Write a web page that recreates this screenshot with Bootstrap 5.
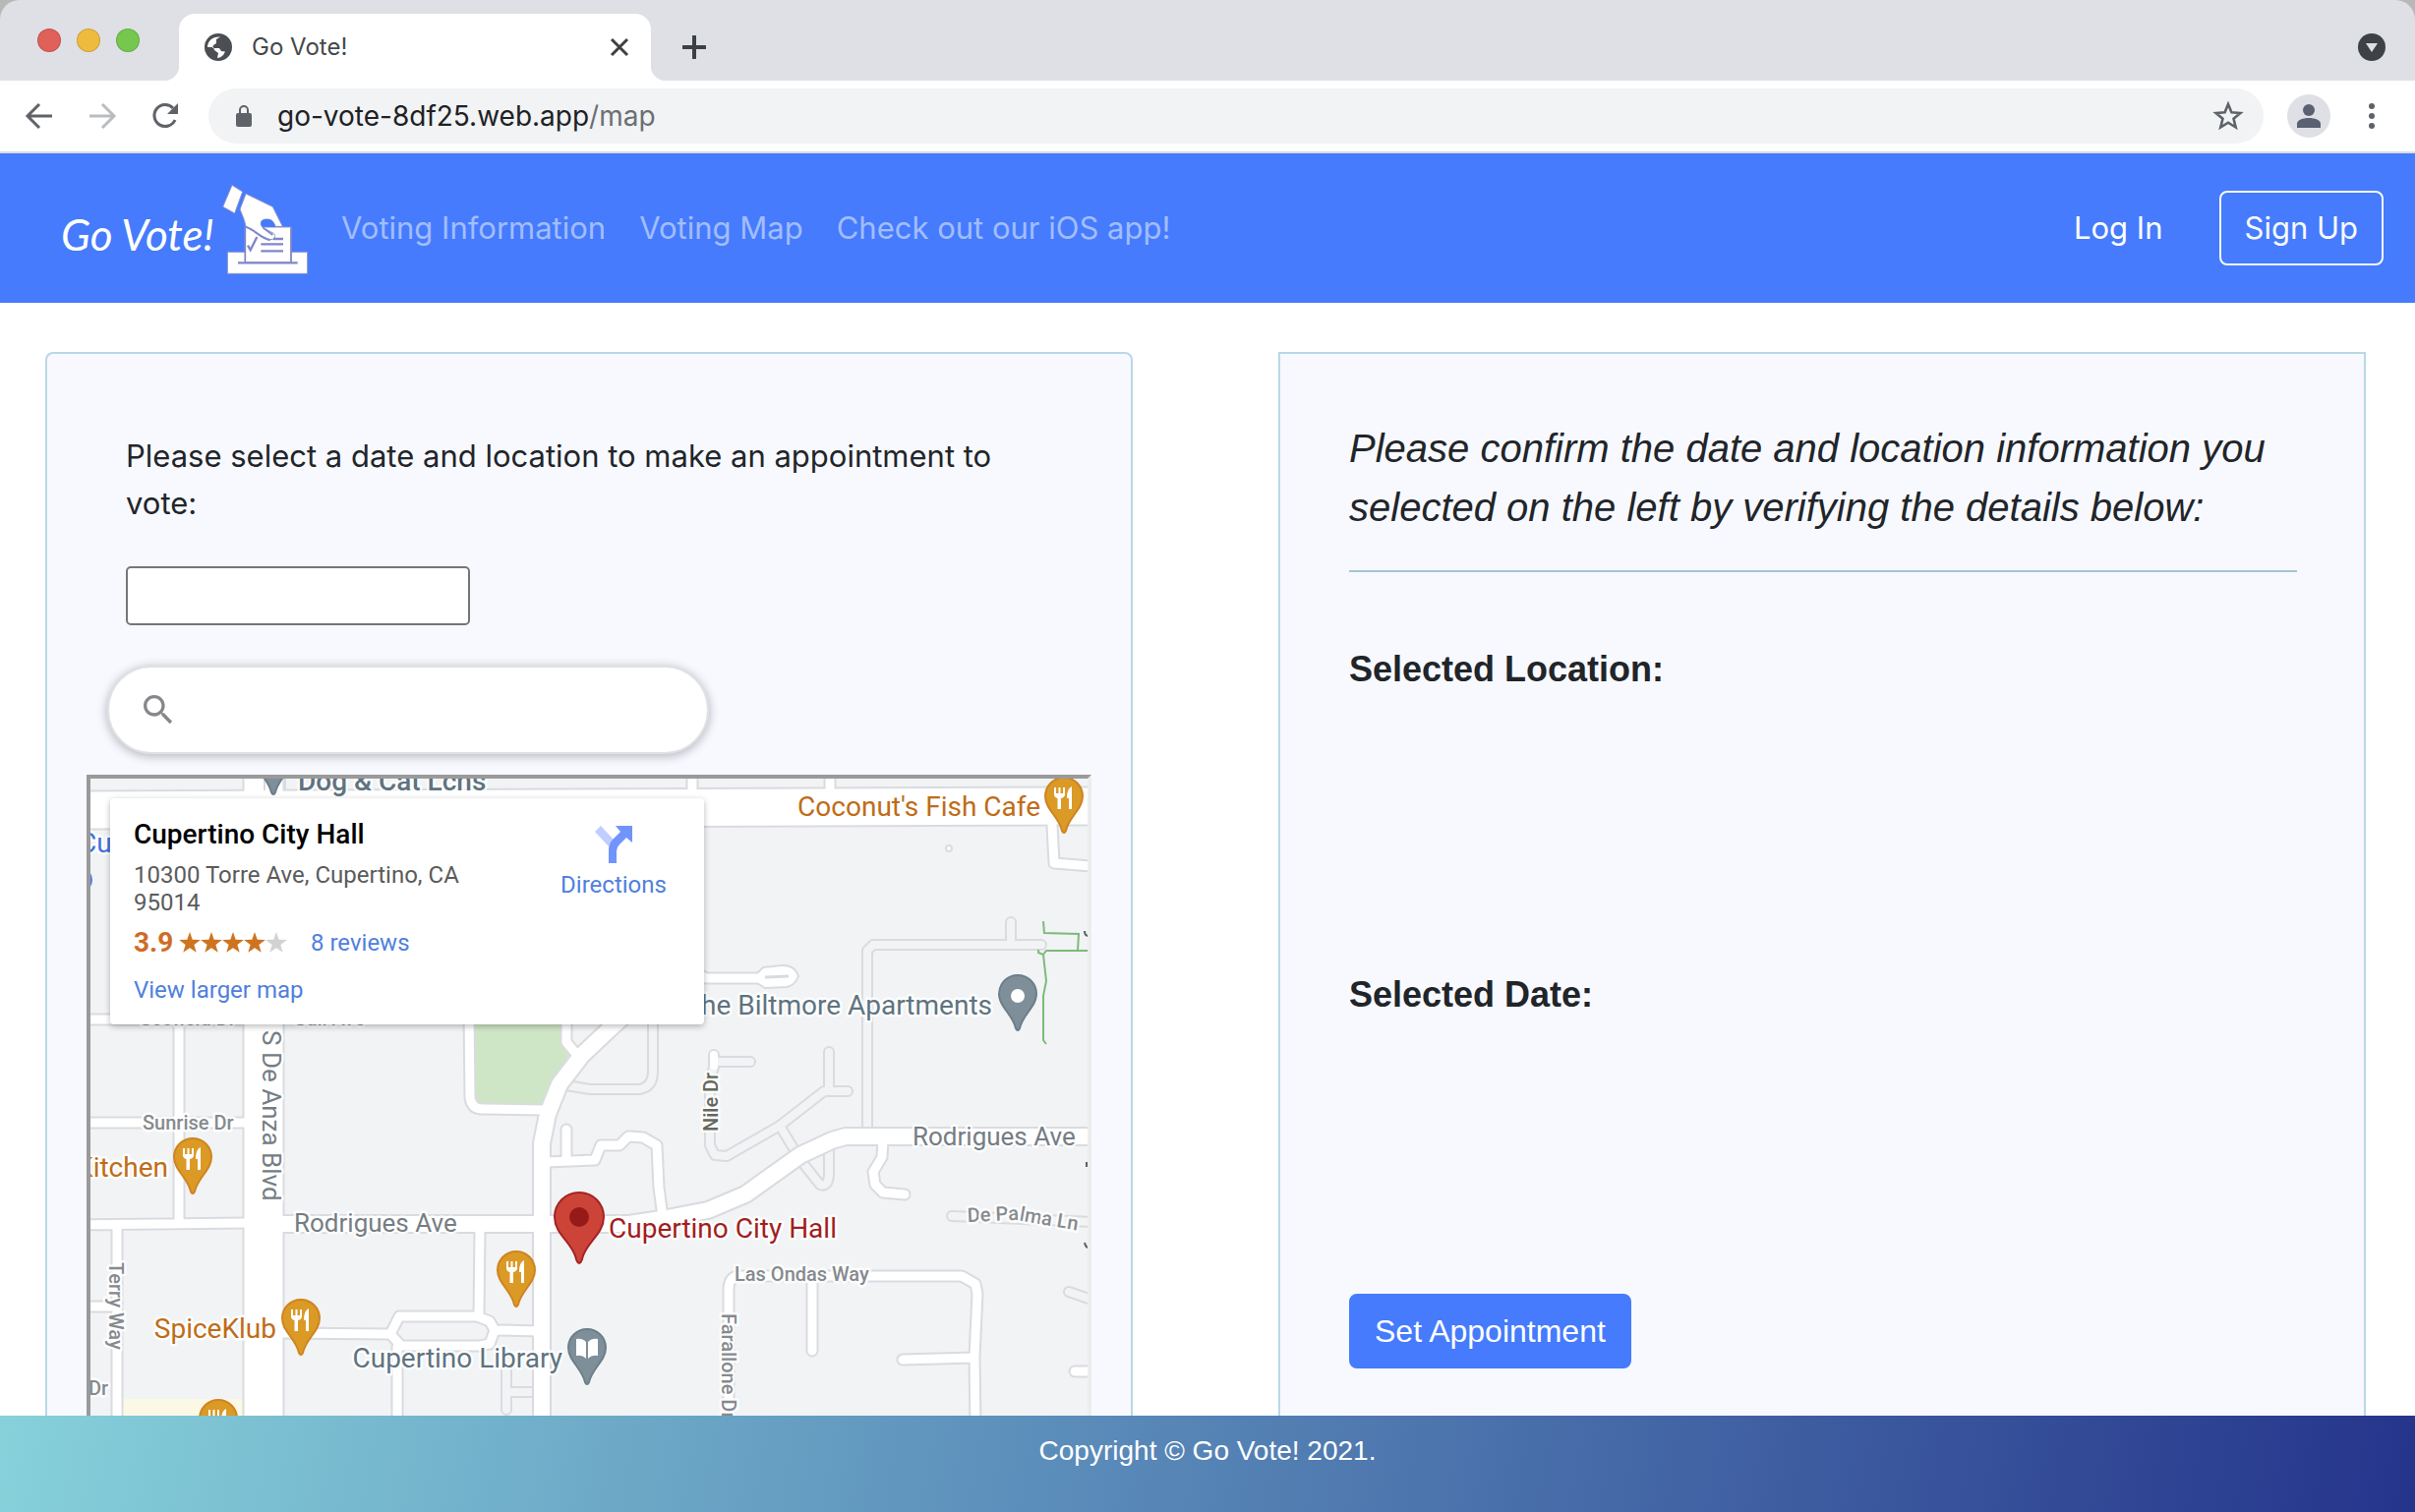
<!DOCTYPE html>
<html lang="en">
<head>
<meta charset="utf-8">
<meta name="viewport" content="width=device-width, initial-scale=1">
<title>Go Vote!</title>
<link href="https://cdn.jsdelivr.net/npm/bootstrap@5.3.0/dist/css/bootstrap.min.css" rel="stylesheet">
<style>
  body { font-family: Inter, "Liberation Sans", sans-serif; font-size: 31px; line-height: 48px; color: #212529; background: #fff; }
  svg { display: block; flex: none; }
  .icon-btn { border: 0; background: none; padding: 0; line-height: 0; color: #5f6368; }

  /* browser frame */
  .strip-back { background: #b9b8b8; }
  .tab-strip { height: 82px; background: #dee0e5; border-radius: 20px 20px 0 0; padding: 0 30px 0 38px; }
  .light-dot { width: 24px; height: 24px; border-radius: 50%; border: 1px solid rgba(0,0,0,.14); }
  .dot-close { background: #e0605a; }
  .dot-min { background: #efbb3f; }
  .dot-max { background: #76c74e; }
  .page-tab { position: relative; width: 480px; height: 68px; margin-left: 40px; padding: 0 20px 0 26px; background: #fff; border-radius: 16px 16px 0 0; font-size: 24px; color: #45494d; }
  .page-tab::before, .page-tab::after { content: ""; position: absolute; bottom: 0; width: 16px; height: 16px; }
  .page-tab::before { left: -16px; background: radial-gradient(circle at 0 0, transparent 16px, #fff 17px); }
  .page-tab::after { right: -16px; background: radial-gradient(circle at 100% 0, transparent 16px, #fff 17px); }
  .tab-extra { height: 68px; }
  .tool-row { height: 74px; border-bottom: 2px solid #dadce0; padding: 0 34px 0 24px; }
  .address { height: 56px; border-radius: 28px; background: #f1f3f4; padding: 0 20px 0 26px; margin-left: 28px; font-size: 28px; color: #202124; }
  .address-path { color: #6b6f73; }
  .avatar { width: 44px; height: 44px; border-radius: 50%; background: #dee0e6; }

  /* site header */
  .site-nav { height: 152px; background: #457bfc; padding: 0 32px 0 62px; }
  .site-brand { padding-top: 4px; }
  .brand-name { font-family: Lato, sans-serif; font-style: italic; font-size: 44px; color: #fff; width: 156px; padding-top: 8px; white-space: nowrap; }
  .site-nav .navbar-nav .nav-link { color: rgba(255,255,255,.5); padding: 0 17px; white-space: nowrap; }
  .site-nav .navbar-nav .login { color: #fff; }
  .btn-site { font-size: 31px; line-height: 48px; padding: 12px 24px; border-width: 2px; border-radius: 8px; }
  .btn-set { font-family: "Liberation Sans", Arial, sans-serif; font-size: 32px; background: #457bfc; border-color: #457bfc; color: #fff; }

  /* panels */
  .panels { padding-top: 50px; min-height: 0; }
  .panel { background: #f8f9ff; border: 2px solid #b8d8e7; border-bottom: 0; }
  .panel-pick { margin: 0 76px 0 46px; border-radius: 8px 8px 0 0; padding: 80px 40px 0; }
  .panel-confirm { margin: 0 50px 0 72px; padding: 66px 68px 0 70px; font-family: "Liberation Sans", Arial, sans-serif; }
  .pick-intro { margin: 0 60px 40px 40px; }
  .date-input { width: 350px; height: 60px; margin: 0 0 41px 40px; border: 2px solid #767676; border-radius: 5px; background: #fff; padding: 0 8px; }
  .search-pill { width: 612px; height: 90px; margin: 0 0 21px 21px; border: 2px solid #dfe1e5; border-radius: 45px; background: #fff; box-shadow: 0 2px 10px 1px rgba(32,33,36,.28); padding: 0 30px; }
  .search-pill input { border: 0; background: none; outline: 0; }
  .confirm-head { font-size: 40px; line-height: 60px; font-style: italic; margin: 0 0 34px; }
  .rule { height: 2px; margin: 0 0 72px; border: 0; background: #a5c4d2; opacity: 1; }
  .pick-label { font-size: 36px; line-height: 54px; font-weight: 700; margin: 0; }
  .pick-value { height: 277px; }

  /* map */
  .map-frame { border: 4px solid; border-color: #9a9a9a #ededed #ededed #9a9a9a; border-bottom: 0; background: #f1f3f5; min-height: 0; }
  .map-art { position: absolute; left: 0; top: 0; width: 100%; height: 100%; font-family: Roboto, sans-serif; }
  .map-art text { paint-order: stroke; stroke: #fff; stroke-width: 5px; stroke-linejoin: round; stroke-opacity: .85; }
  .poi { font-size: 28px; }
  .avenue { font-size: 26px; fill: #757d84; }
  .street { font-size: 20px; font-weight: 500; fill: #868a8e; }
  .place-card { position: absolute; left: 20px; top: 20px; width: 604px; height: 230px; padding: 20px 32px 20px 24px; background: #fff; border-radius: 4px; box-shadow: 0 2px 6px rgba(0,0,0,.28); font-family: Roboto, sans-serif; font-size: 24px; line-height: 28px; }
  .place-card a { color: #5080dd; text-decoration: none; }
  .place-name { font-size: 28px; line-height: 34px; font-weight: 500; color: #000; margin: 0 0 10px; }
  .place-address { width: 370px; color: #5b5b5b; margin: 0 0 9px; }
  .place-score { font-size: 28px; line-height: 36px; font-weight: 700; color: #cf6c25; width: 46px; }
  .place-directions { width: 120px; margin-top: 8px; }

  .site-footer { height: 98px; padding-top: 12px; background: linear-gradient(100deg, #86d1da 0%, #5a8bb9 45%, #25348b 100%); color: #fff; font-family: "Liberation Sans", Arial, sans-serif; font-size: 28px; }
</style>
</head>
<body class="d-flex flex-column vh-100 overflow-hidden">

<div class="strip-back">
  <div class="tab-strip d-flex align-items-end">
    <div class="d-flex align-items-center h-100 gap-3">
      <span class="light-dot dot-close"></span>
      <span class="light-dot dot-min"></span>
      <span class="light-dot dot-max"></span>
    </div>
    <div class="page-tab d-flex align-items-center">
      <svg width="28" height="28" viewBox="0 0 28 28"><circle cx="14" cy="14" r="14" fill="#4b4e53"/><path d="M16 3.500l-4 2.500v4l-3 2-1 3h7l2 3 4 .5-2 3.500c-2 2-4 3-6 3l1-5-4-3-1-3H3c0-6 5-11 13-10.500z" fill="#fff"/></svg>
      <span class="ms-3 ps-1">Go Vote!</span>
      <button class="icon-btn ms-auto" aria-label="Close tab"><svg width="24" height="24" viewBox="0 0 24 24"><path d="M4 4l16 16M20 4L4 20" stroke="#3d4043" stroke-width="3"/></svg></button>
    </div>
    <div class="tab-extra d-flex align-items-center flex-grow-1">
      <button class="icon-btn ms-4 ps-2" aria-label="New tab"><svg width="24" height="24" viewBox="0 0 24 24"><path d="M12 1v22M1 12h22" stroke="#3d4043" stroke-width="4" stroke-linecap="round"/></svg></button>
      <button class="icon-btn ms-auto" aria-label="Search tabs"><svg width="28" height="28" viewBox="0 0 28 28"><circle cx="14" cy="14" r="14" fill="#3e4145"/><path d="M8 10h12l-6 9z" fill="#dee0e5"/></svg></button>
    </div>
  </div>
</div>

<div class="tool-row d-flex align-items-center bg-white">
  <button class="icon-btn" aria-label="Back"><svg width="32" height="32" viewBox="0 0 32 32"><path d="M29 16H5M16 4L4 16l12 12" fill="none" stroke="#5f6368" stroke-width="3"/></svg></button>
  <button class="icon-btn ms-4 ps-2" aria-label="Forward"><svg width="32" height="32" viewBox="0 0 32 32"><path d="M3 16h24M16 4l12 12-12 12" fill="none" stroke="#babcbe" stroke-width="3"/></svg></button>
  <button class="icon-btn ms-4 ps-2" aria-label="Reload"><svg width="32" height="32" viewBox="0 0 32 32"><path d="M26 20a11 11 0 1 1-2-12" fill="none" stroke="#5f6368" stroke-width="3"/><path d="M29 3v11H18z" fill="#5f6368"/></svg></button>
  <div class="address d-flex align-items-center flex-grow-1">
    <svg width="20" height="24" viewBox="0 0 20 24"><rect x="2" y="9" width="16" height="14" rx="2" fill="#5f6368"/><path d="M6 10V6a4 4 0 0 1 8 0v4" fill="none" stroke="#5f6368" stroke-width="2"/></svg>
    <span class="ps-4">go-vote-8df25.web.app<span class="address-path">/map</span></span>
    <button class="icon-btn ms-auto" aria-label="Bookmark"><svg width="32" height="32" viewBox="0 0 32 32"><path d="M16 4l3.400 8.300 9 .7-6.900 5.800 2.200 8.700L16 22.700 8.300 27.500l2.200-8.700L3.600 13l9-.7z" fill="none" stroke="#5f6368" stroke-width="2.600"/></svg></button>
  </div>
  <button class="icon-btn avatar ms-4 d-flex align-items-center justify-content-center" aria-label="Profile"><svg width="26" height="26" viewBox="0 0 26 26"><circle cx="13" cy="7" r="6" fill="#5b6072"/><path d="M1 25v-4c0-4 6-6 12-6s12 2 12 6v4z" fill="#5b6072"/></svg></button>
  <button class="icon-btn ms-4 ps-2" aria-label="Menu"><svg width="20" height="28" viewBox="0 0 20 28"><g fill="#5f6368"><circle cx="10" cy="4" r="3"/><circle cx="10" cy="14" r="3"/><circle cx="10" cy="24" r="3"/></g></svg></button>
</div>

<nav class="site-nav navbar navbar-expand flex-nowrap">
  <a class="site-brand d-flex align-items-center text-decoration-none me-3" href="#">
    <span class="brand-name">Go Vote!</span>
    <svg class="ms-2" width="88" height="94" viewBox="528 52 264 282">
      <g fill="#fff" stroke="#8d90cf" stroke-width="3">
        <path d="M544 260H788V326H544z"/>
        <path d="M598 184H738V292H598z"/>
        <path d="M558 56l32 20-24 66-36-20z"/>
        <path d="M600 82l82 40 30 60h-22c-4-12-10-22-26-22-18 0-22 12-14 24l36 20c6 6 2 18-8 18-30-4-50-32-78-40-4-20-12-38-18-52z"/>
      </g>
      <path d="M650 183c-8-12-4-23 14-23 16 0 22 10 26 23z" fill="#457bfc"/>
      <g fill="none" stroke="#8087c6" stroke-width="7">
        <path d="M576 293H758"/><path d="M738 186V290M598 186V290" stroke-width="5"/>
        <path d="M684 220H714M646 236H714M646 257H714"/>
        <path d="M606 240l8 14 20-40"/>
        <path d="M600 184c30 10 40 32 74 40M652 186l30 22" stroke-width="5"/>
      </g>
    </svg>
  </a>
  <div class="navbar-nav flex-grow-1 align-items-center">
    <a class="nav-link" href="#">Voting Information</a>
    <a class="nav-link" href="#">Voting Map</a>
    <a class="nav-link" href="#">Check out our iOS app!</a>
    <a class="nav-link login ms-auto me-4" href="#">Log In</a>
    <a class="btn btn-outline-light btn-site ms-3" href="#">Sign Up</a>
  </div>
</nav>

<main class="panels row g-0 flex-grow-1 flex-nowrap">
  <section class="col-6 d-flex">
    <div class="panel panel-pick d-flex flex-column flex-grow-1">
      <label class="pick-intro" for="voteDate">Please select a date and location to make an appointment to vote:</label>
      <input class="date-input" id="voteDate" type="text">
      <div class="search-pill d-flex align-items-center">
        <svg width="40" height="40" viewBox="0 0 24 24" fill="#85878a"><path d="M15.500 14h-.79l-.28-.27C15.410 12.590 16 11.110 16 9.500 16 5.910 13.090 3 9.500 3S3 5.910 3 9.500 5.910 16 9.500 16c1.610 0 3.090-.59 4.230-1.570l.27.28v.79l5 4.990L20.490 19l-4.990-5zm-6 0C7.010 14 5 11.990 5 9.500S7.010 5 9.500 5 14 7.010 14 9.500 11.990 14 9.500 14z"/></svg>
        <input class="flex-grow-1 ms-2" type="search" aria-label="Search locations">
      </div>
      <div class="map-frame position-relative flex-grow-1 overflow-hidden">
        <svg class="map-art" viewBox="92 792 1014 648" preserveAspectRatio="xMinYMin slice">
          <defs>
            <g id="lanes" fill="none" stroke-linejoin="round" stroke-linecap="round">
              <path d="M576 1104L600 1108H650Q664 1106 664 1090V1036"/>
              <path d="M882 1150V967L888 961H1059M1028 957V938"/>
              <path d="M726 1073V1085L722 1100V1165L727 1175 739 1176 793 1145 838 1110H862M843 1070V1108M727 1080H763"/>
              <path d="M793 1145L814 1180 834 1205Q842 1208 843 1195V1165"/>
              <path d="M968 1237L1110 1243M1087 1314L1110 1322"/>
              <path d="M515 1385V1434M520 1416H550"/>
            </g>
            <g id="streets" fill="none" stroke-linejoin="round" stroke-linecap="round">
              <path d="M704 780V815M844 780V815"/>
              <path d="M182 1037V1243M80 1037H250M80 1142H250M80 1246L250 1244M119 1248V1450M80 1329H115"/>
              <path d="M477 1030L478 1117Q480 1128 490 1128L553 1129M576 1030V1060L586 1072"/>
              <path d="M700 985L718 995H771"/>
              <path d="M1070 840L1072 878 1110 881"/>
              <path d="M556 1182L605 1180 611 1165H630L639 1156 654 1157 668 1165 670 1208 674 1238M576 1149V1178"/>
              <path d="M898 1160L897 1177 888 1192 890 1205 898 1213 920 1215"/>
              <path d="M741 1450V1312Q741 1298 752 1298H978L992 1306 994 1316 991 1380 992 1450M826 1300V1374M918 1383L990 1381M1093 1395H1110"/>
              <path d="M288 1356L397 1357 406 1339H485L498 1344 503 1353 498 1367 488 1369H408L397 1357M503 1353L551 1354M488 1250L487 1338M404 1370V1450"/>
            </g>
            <g id="avenues" fill="none" stroke-linejoin="round">
              <path d="M280 1245H640L673 1240 720 1231 758 1215 814 1175 846 1160 860 1156H1110"/>
              <path d="M551 1450V1163L557 1133 569 1103 592 1073 625 1042 660 1010"/>
            </g>
            <path id="pin" d="M0 1C10.500 1 19 9.500 19 20C19 33 5 41 2 55Q0 59 -2 55C-5 41 -19 33 -19 20C-19 9.500 -10.500 1 0 1Z" stroke-width="2"/>
            <g id="food"><use href="#pin" fill="#db9a26" stroke="#cf8420"/><path d="M-10 11v7q0 3 3.500 4v11h3.500V22Q1 21 1 18V11H-1v6H-3.500V11H-5.500v6H-8V11zM8 10q-5 2-5 12h2v11h3z" fill="#fff"/></g>
          </defs>
          <path d="M481 1036H571L573 1062 580 1072 560 1100 550 1126H488L481 1117z" fill="#cfe6c6"/>
          <path d="M125 1423H248V1450H125z" fill="#fcf8e6"/>
          <use href="#lanes" stroke="#dadbdf" stroke-width="12"/>
          <use href="#lanes" stroke="#f1f3f5" stroke-width="8"/>
          <g stroke="#dadbdf">
            <use href="#streets" stroke-width="13"/>
            <use href="#avenues" stroke-width="20"/>
            <path d="M268 780V1450" stroke-width="43"/>
            <path d="M80 824L1110 820" stroke-width="41"/>
          </g>
          <g fill="#fff" stroke="#dadbdf" stroke-width="2"><path d="M770 990L776 984 795 982Q808 981 812 993 808 1003 800 1004L778 1005 770 1000z"/><circle cx="965" cy="863" r="3"/></g>
          <g stroke="#fff">
            <use href="#streets" stroke-width="9"/>
            <use href="#avenues" stroke-width="16"/>
            <path d="M268 780V1450" stroke-width="39"/>
            <path d="M80 824L1110 820" stroke-width="37"/>
          </g>
          <path d="M726 1073V1084" stroke="#fff" stroke-width="8" stroke-linecap="round"/>
          <path d="M778 994L802 993" stroke="#dadbdf" stroke-width="3"/>
          <path d="M269 792V804M290 792V804" stroke="#dadbdf" stroke-width="2"/>
          <path d="M1061 937L1062 949 1097 950 1096 967M1056 966V969L1061 971 1064 967H1110M1061 971L1064 998 1061 1013V1058L1064 1062" fill="none" stroke="#7dbb78" stroke-width="2"/>
          <circle cx="82" cy="895" r="12" fill="#4f7ff0"/>

          <g class="poi">
            <text x="303" y="804" fill="#5f7380" font-weight="500">Dog &amp; Cat Lcns</text>
            <text x="80" y="867" fill="#4272dc">Cu</text>
            <text x="1058" y="830" text-anchor="end" fill="#c06c17">Coconut's Fish Cafe</text>
            <text x="1009" y="1032" text-anchor="end" fill="#5f7380">The Biltmore Apartments</text>
            <text x="171" y="1197" text-anchor="end" fill="#c06c17">Kitchen</text>
            <text x="281" y="1361" text-anchor="end" fill="#c06c17">SpiceKlub</text>
            <text x="572" y="1391" text-anchor="end" fill="#5f7380">Cupertino Library</text>
            <text x="619" y="1259" fill="#a31d1d">Cupertino City Hall</text>
          </g>
          <g class="avenue">
            <text x="299" y="1253">Rodrigues Ave</text>
            <text x="928" y="1165">Rodrigues Ave</text>
            <text transform="translate(267 1048) rotate(90)">S De Anza Blvd</text>
          </g>
          <g class="street">
            <text x="142" y="1043">Scofield Dr</text>
            <text x="298" y="1043">Gail Ave</text>
            <text x="145" y="1149">Sunrise Dr</text>
            <text x="90" y="1419">Dr</text>
            <text x="747" y="1303">Las Ondas Way</text>
            <path id="palma" d="M984 1243L1034 1241 1110 1254" fill="none"/>
            <text><textPath href="#palma">De Palma Ln</textPath></text>
            <text transform="translate(111 1284) rotate(90)">Terry Way</text>
            <text transform="translate(734 1336) rotate(90)">Farallone Dr</text>
            <text transform="translate(730 1151) rotate(-90)" fill="#66675c">Nile Dr</text>
          </g>
          <path d="M1103 947q0 5 4 5M1103 1264q1 5 4 5M1105 1182v5" fill="none" stroke="#5d6166" stroke-width="2"/>
          <g stroke="#6b7e8a" fill="#7e8f9a">
            <use href="#pin" x="278" y="751"/><use href="#pin" x="1035" y="991"/><use href="#pin" x="597" y="1351"/>
          </g>
          <circle cx="1035" cy="1013" r="7" fill="#fff"/>
          <path d="M586 1362q6-1 10 3v17q-4-4-10-3zM608 1362q-6-1-10 3v17q4-4 10-3z" fill="#fff"/>
          <use href="#food" x="196" y="1157"/><use href="#food" x="306" y="1321"/><use href="#food" x="525" y="1272"/><use href="#food" x="222" y="1423"/><use href="#food" x="1082" y="790"/>
          <path d="M589 1213C603 1213 614 1224 614 1238C614 1256 595 1264 592 1281Q589 1289 586 1281C583 1264 564 1256 564 1238C564 1224 575 1213 589 1213Z" fill="#cc4438" stroke="#a52221" stroke-width="2"/>
          <circle cx="589" cy="1238" r="10" fill="#961a18"/>
        </svg>
        <div class="place-card d-flex justify-content-between">
          <div>
            <h2 class="place-name">Cupertino City Hall</h2>
            <p class="place-address">10300 Torre Ave, Cupertino, CA 95014</p>
            <div class="d-flex align-items-center mb-3">
              <span class="place-score">3.9</span>
              <svg width="110" height="22" viewBox="0 0 110 22"><defs><path id="star" d="M11 0l2.700 7.700 8.200.2-6.500 5 2.300 7.900L11 16.200l-6.700 4.600 2.300-7.900-6.500-5 8.200-.2z"/></defs><g fill="#ce7420"><use href="#star"/><use href="#star" x="22"/><use href="#star" x="44"/><use href="#star" x="66"/></g><use href="#star" x="88" fill="#d2d2d2"/></svg>
              <a class="ms-4" href="#">8 reviews</a>
            </div>
            <a href="#">View larger map</a>
          </div>
          <a class="place-directions d-flex flex-column align-items-center" href="#">
            <svg class="mb-2" width="38" height="38" viewBox="0 0 38 38"><path d="M6 0L0 6l14 15 5-7z" fill="#bfceff"/><path d="M14 38V24q0-6 5-11l7-7-5-6h17v17l-6-5-7 7q-3 3-3 7v12z" fill="#7094fb"/></svg>
            Directions
          </a>
        </div>
      </div>
    </div>
  </section>
  <section class="col-6 d-flex">
    <div class="panel panel-confirm flex-grow-1">
      <p class="confirm-head">Please confirm the date and location information you selected on the left by verifying the details below:</p>
      <hr class="rule">
      <h2 class="pick-label">Selected Location:</h2>
      <div class="pick-value"></div>
      <h2 class="pick-label">Selected Date:</h2>
      <div class="pick-value"></div>
      <button class="btn btn-site btn-set" type="button">Set Appointment</button>
    </div>
  </section>
</main>

<footer class="site-footer text-center">Copyright © Go Vote! 2021.</footer>

<script src="https://cdn.jsdelivr.net/npm/bootstrap@5.3.0/dist/js/bootstrap.bundle.min.js"></script>
</body>
</html>
